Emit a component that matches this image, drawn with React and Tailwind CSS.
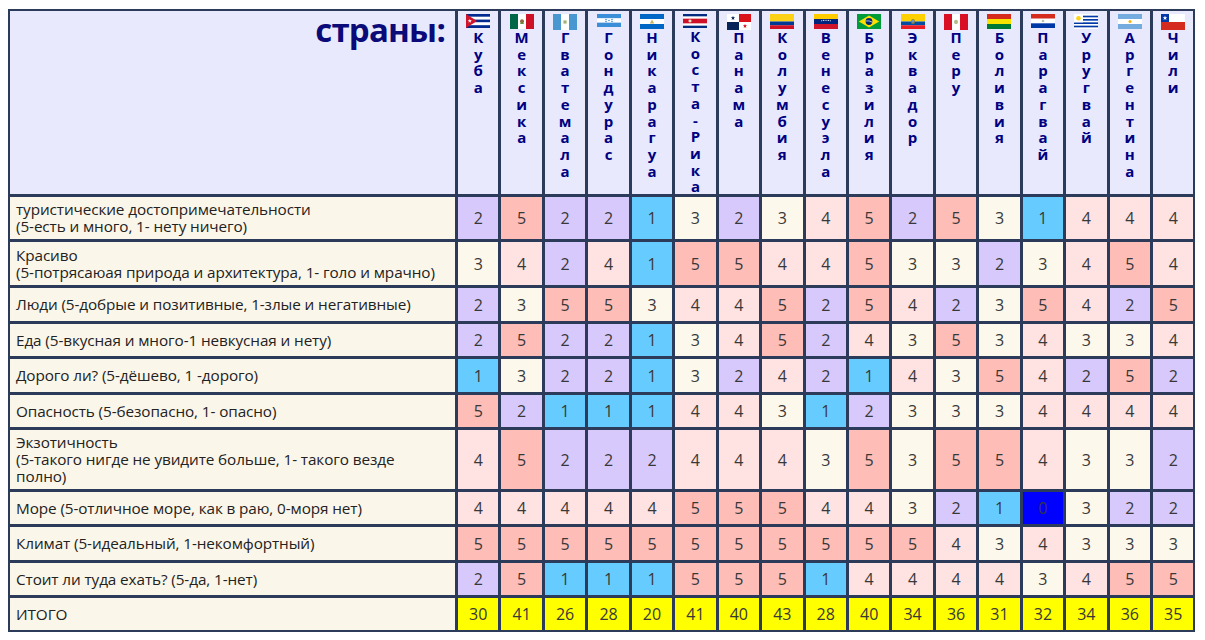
import React from 'react';

// ─── helpers for the little flags ──
const star = (cx, cy, r) => {
  const pts = [];
  for (let i = 0; i < 10; i++) {
    const a = (Math.PI / 5) * i - Math.PI / 2;
    const rr = i % 2 === 0 ? r : r * 0.42;
    pts.push(`${(cx + rr * Math.cos(a)).toFixed(2)},${(cy + rr * Math.sin(a)).toFixed(2)}`);
  }
  return pts.join(' ');
};

const Flag = ({ children, h = 15 }) => (
  <svg width="24" height={h} viewBox="0 0 24 15" preserveAspectRatio="none" className="block">
    {children}
  </svg>
);

const hStripes = (colors) => {
  const s = 15 / colors.length;
  return colors.map((c, i) => <rect key={i} x="0" y={i * s} width="24" height={s + 0.05} fill={c} />);
};
const vStripes = (colors) =>
  colors.map((c, i) => <rect key={i} x={i * 8} y="0" width="8.05" height="15" fill={c} />);

const FLAGS = {
  cuba: (
    <Flag h={14}>
      {hStripes(['#002a8f', '#fff', '#002a8f', '#fff', '#002a8f'])}
      <polygon points="0,0 11,7.5 0,15" fill="#cf142b" />
      <polygon points={star(3.8, 7.5, 2.2)} fill="#fff" />
    </Flag>
  ),
  mexico: (
    <Flag>
      {vStripes(['#006847', '#fff', '#ce1126'])}
      <circle cx="12" cy="7.3" r="2" fill="#8c6a3a" />
      <ellipse cx="12" cy="9.3" rx="2.2" ry="0.8" fill="#5b8a3a" />
    </Flag>
  ),
  guatemala: (
    <Flag h={16}>
      {vStripes(['#4997d0', '#fff', '#4997d0'])}
      <circle cx="12" cy="7.5" r="2.2" fill="#c9d3a8" />
      <circle cx="12" cy="7.5" r="1" fill="#8aa46a" />
    </Flag>
  ),
  honduras: (
    <Flag h={13}>
      {hStripes(['#3b8fd9', '#fff', '#3b8fd9'])}
      {[[9, 6.3], [15, 6.3], [12, 7.5], [9, 8.7], [15, 8.7]].map(([x, y], i) => (
        <circle key={i} cx={x} cy={y} r="0.8" fill="#3b8fd9" />
      ))}
    </Flag>
  ),
  nicaragua: (
    <Flag>
      {hStripes(['#0067c6', '#fff', '#0067c6'])}
      <polygon points="12,5.6 14.2,9.4 9.8,9.4" fill="#c8b55a" />
    </Flag>
  ),
  costarica: (
    <Flag h={14}>
      <rect x="0" y="0" width="24" height="15" fill="#002b7f" />
      <rect x="0" y="2.5" width="24" height="10" fill="#fff" />
      <rect x="0" y="5" width="24" height="5" fill="#ce1126" />
      <circle cx="7" cy="7.5" r="1.6" fill="#e6e1c8" />
    </Flag>
  ),
  panama: (
    <Flag h={16}>
      <rect x="0" y="0" width="24" height="15" fill="#fff" />
      <rect x="12" y="0" width="12" height="7.5" fill="#da121a" />
      <rect x="0" y="7.5" width="12" height="7.5" fill="#072357" />
      <polygon points={star(6, 3.75, 2.2)} fill="#072357" />
      <polygon points={star(18, 11.25, 2.2)} fill="#da121a" />
    </Flag>
  ),
  colombia: (
    <Flag>
      <rect x="0" y="0" width="24" height="7.5" fill="#fcd116" />
      <rect x="0" y="7.5" width="24" height="3.75" fill="#003893" />
      <rect x="0" y="11.25" width="24" height="3.75" fill="#ce1126" />
    </Flag>
  ),
  venezuela: (
    <Flag>
      {hStripes(['#ffcc00', '#00247d', '#cf142b'])}
      {[-4, -2.4, -0.8, 0.8, 2.4, 4].map((d, i) => (
        <circle key={i} cx={12 + d * 1.1} cy={7.6 - Math.cos(d / 5) * 1.6 + 0.2} r="0.55" fill="#fff" />
      ))}
    </Flag>
  ),
  brazil: (
    <Flag>
      <rect x="0" y="0" width="24" height="15" fill="#009c3b" />
      <polygon points="12,1.5 22.2,7.5 12,13.5 1.8,7.5" fill="#ffdf00" />
      <circle cx="12" cy="7.5" r="3.4" fill="#002776" />
      <path d="M8.7 7 Q12 6.2 15.3 8.2" stroke="#fff" strokeWidth="0.7" fill="none" />
    </Flag>
  ),
  ecuador: (
    <Flag>
      <rect x="0" y="0" width="24" height="7.5" fill="#ffd100" />
      <rect x="0" y="7.5" width="24" height="3.75" fill="#034ea2" />
      <rect x="0" y="11.25" width="24" height="3.75" fill="#ed1c24" />
      <ellipse cx="12" cy="7.5" rx="2" ry="2.6" fill="#8f7a3c" />
      <ellipse cx="12" cy="7.2" rx="1.1" ry="1.4" fill="#6d9bc3" />
    </Flag>
  ),
  peru: (
    <Flag h={16}>
      {vStripes(['#d91023', '#fff', '#d91023'])}
      <circle cx="12" cy="7.5" r="2" fill="#a7c08a" />
      <circle cx="12" cy="7.3" r="1" fill="#d9b07a" />
    </Flag>
  ),
  bolivia: (
    <Flag>{hStripes(['#d52b1e', '#f9e300', '#007934'])}</Flag>
  ),
  paraguay: (
    <Flag h={14}>
      {hStripes(['#d52b1e', '#fff', '#0038a8'])}
      <circle cx="12" cy="7.5" r="1.3" fill="#b9c4a3" />
    </Flag>
  ),
  uruguay: (
    <Flag>
      <rect x="0" y="0" width="24" height="15" fill="#fff" />
      {[1, 3, 5, 7].map((k) => (
        <rect key={k} x="0" y={k * (15 / 9)} width="24" height={15 / 9} fill="#0038a8" />
      ))}
      <rect x="0" y="0" width="9" height={15 / 9 * 5} fill="#fff" />
      <circle cx="4.5" cy="4.2" r="2.3" fill="#fcd116" />
    </Flag>
  ),
  argentina: (
    <Flag>
      {hStripes(['#74acdf', '#fff', '#74acdf'])}
      <circle cx="12" cy="7.5" r="1.5" fill="#f6b40e" />
    </Flag>
  ),
  chile: (
    <Flag h={16}>
      <rect x="0" y="0" width="24" height="7.5" fill="#fff" />
      <rect x="0" y="7.5" width="24" height="7.5" fill="#d52b1e" />
      <rect x="0" y="0" width="8" height="7.5" fill="#0039a6" />
      <polygon points={star(4, 3.75, 2.4)} fill="#fff" />
    </Flag>
  ),
};

const COUNTRIES = [
  ['Куба', 'cuba'],
  ['Мексика', 'mexico'],
  ['Гватемала', 'guatemala'],
  ['Гондурас', 'honduras'],
  ['Никарагуа', 'nicaragua'],
  ['Коста-Рика', 'costarica'],
  ['Панама', 'panama'],
  ['Колумбия', 'colombia'],
  ['Венесуэла', 'venezuela'],
  ['Бразилия', 'brazil'],
  ['Эквадор', 'ecuador'],
  ['Перу', 'peru'],
  ['Боливия', 'bolivia'],
  ['Парагвай', 'paraguay'],
  ['Уругвай', 'uruguay'],
  ['Аргентина', 'argentina'],
  ['Чили', 'chile'],
];

const ROWS = [
  { label: ['туристические достопримечательности', '(5-есть и много, 1- нету ничего)'], v: [2, 5, 2, 2, 1, 3, 2, 3, 4, 5, 2, 5, 3, 1, 4, 4, 4] },
  { label: ['Красиво', '(5-потрясаюая природа и архитектура, 1- голо и мрачно)'], v: [3, 4, 2, 4, 1, 5, 5, 4, 4, 5, 3, 3, 2, 3, 4, 5, 4] },
  { label: ['Люди (5-добрые и позитивные, 1-злые и негативные)'], v: [2, 3, 5, 5, 3, 4, 4, 5, 2, 5, 4, 2, 3, 5, 4, 2, 5] },
  { label: ['Еда (5-вкусная и много-1 невкусная и нету)'], v: [2, 5, 2, 2, 1, 3, 4, 5, 2, 4, 3, 5, 3, 4, 3, 3, 4] },
  { label: ['Дорого ли? (5-дёшево, 1 -дорого)'], v: [1, 3, 2, 2, 1, 3, 2, 4, 2, 1, 4, 3, 5, 4, 2, 5, 2] },
  { label: ['Опасность (5-безопасно, 1- опасно)'], v: [5, 2, 1, 1, 1, 4, 4, 3, 1, 2, 3, 3, 3, 4, 4, 4, 4] },
  { label: ['Экзотичность', '(5-такого нигде не увидите больше, 1- такого везде', 'полно)'], v: [4, 5, 2, 2, 2, 4, 4, 4, 3, 5, 3, 5, 5, 4, 3, 3, 2] },
  { label: ['Море (5-отличное море, как в раю, 0-моря нет)'], v: [4, 4, 4, 4, 4, 5, 5, 5, 4, 4, 3, 2, 1, 0, 3, 2, 2] },
  { label: ['Климат (5-идеальный, 1-некомфортный)'], v: [5, 5, 5, 5, 5, 5, 5, 5, 5, 5, 5, 4, 3, 4, 3, 3, 3] },
  { label: ['Стоит ли туда ехать? (5-да, 1-нет)'], v: [2, 5, 1, 1, 1, 5, 5, 5, 1, 4, 4, 4, 4, 3, 4, 5, 5] },
];

const TOTALS = [30, 41, 26, 28, 20, 41, 40, 43, 28, 40, 34, 36, 31, 32, 34, 36, 35];

const CELL_BG = {
  0: 'bg-[#0000ff]',
  1: 'bg-[#66ccff]',
  2: 'bg-[#d8c9fc]',
  3: 'bg-[#fcf8ec]',
  4: 'bg-[#ffe2e2]',
  5: 'bg-[#ffbdb8]',
};

const font = { fontFamily: '"Open Sans", "Noto Sans", sans-serif' };

const Label = ({ lines }) => (
  <div className="bg-[#fbf6ea] flex items-center pl-[6px] text-[15.3px] leading-[16.7px] text-[#222] whitespace-nowrap tracking-[-0.1px]">
    <div>
      {lines.map((l, i) => (
        <div key={i}>{l}</div>
      ))}
    </div>
  </div>
);

const Num = ({ v, bg }) => (
  <div className={`${bg} flex items-center justify-center text-[16px] text-[#383838]`}>{v}</div>
);

export default function App() {
  return (
    <div className="bg-white min-h-[640px] pt-[9px] pl-[8px]" style={font}>
      <div className="inline-grid bg-[#2b3b59] p-[2px] gap-[3px] grid-cols-[445px_repeat(17,40.45px)] grid-rows-[183px_42px_43px_33px_32px_33px_32px_59px_32px_33px_32px_32px]">
        {/* ── header ── */}
        <div className="bg-[#e8e9fc] text-right pr-[10px] pt-[3px]">
          <span className="text-[33px] leading-[32px] font-bold text-[#0a0a78] tracking-[-0.8px]">страны:</span>
        </div>
        {COUNTRIES.map(([name, key]) => (
          <div key={key} className="bg-[#e8e9fc] flex flex-col items-center pt-[3px] overflow-visible">
            <div className="h-[15px] flex items-start">{FLAGS[key]}</div>
            <div className="flex flex-col items-center text-[15px] leading-[16.7px] font-bold text-[#000080]">
              {[...name].map((ch, i) => (
                <span key={i}>{ch}</span>
              ))}
            </div>
          </div>
        ))}

        {/* ── rows ── */}
        {ROWS.map((r, ri) => (
          <React.Fragment key={ri}>
            <Label lines={r.label} />
            {r.v.map((v, ci) => (
              <Num key={ci} v={v} bg={CELL_BG[v]} />
            ))}
          </React.Fragment>
        ))}

        {/* ── totals ── */}
        <Label lines={['ИТОГО']} />
        {TOTALS.map((t, i) => (
          <Num key={i} v={t} bg="bg-[#ffff00]" />
        ))}
      </div>
    </div>
  );
}
